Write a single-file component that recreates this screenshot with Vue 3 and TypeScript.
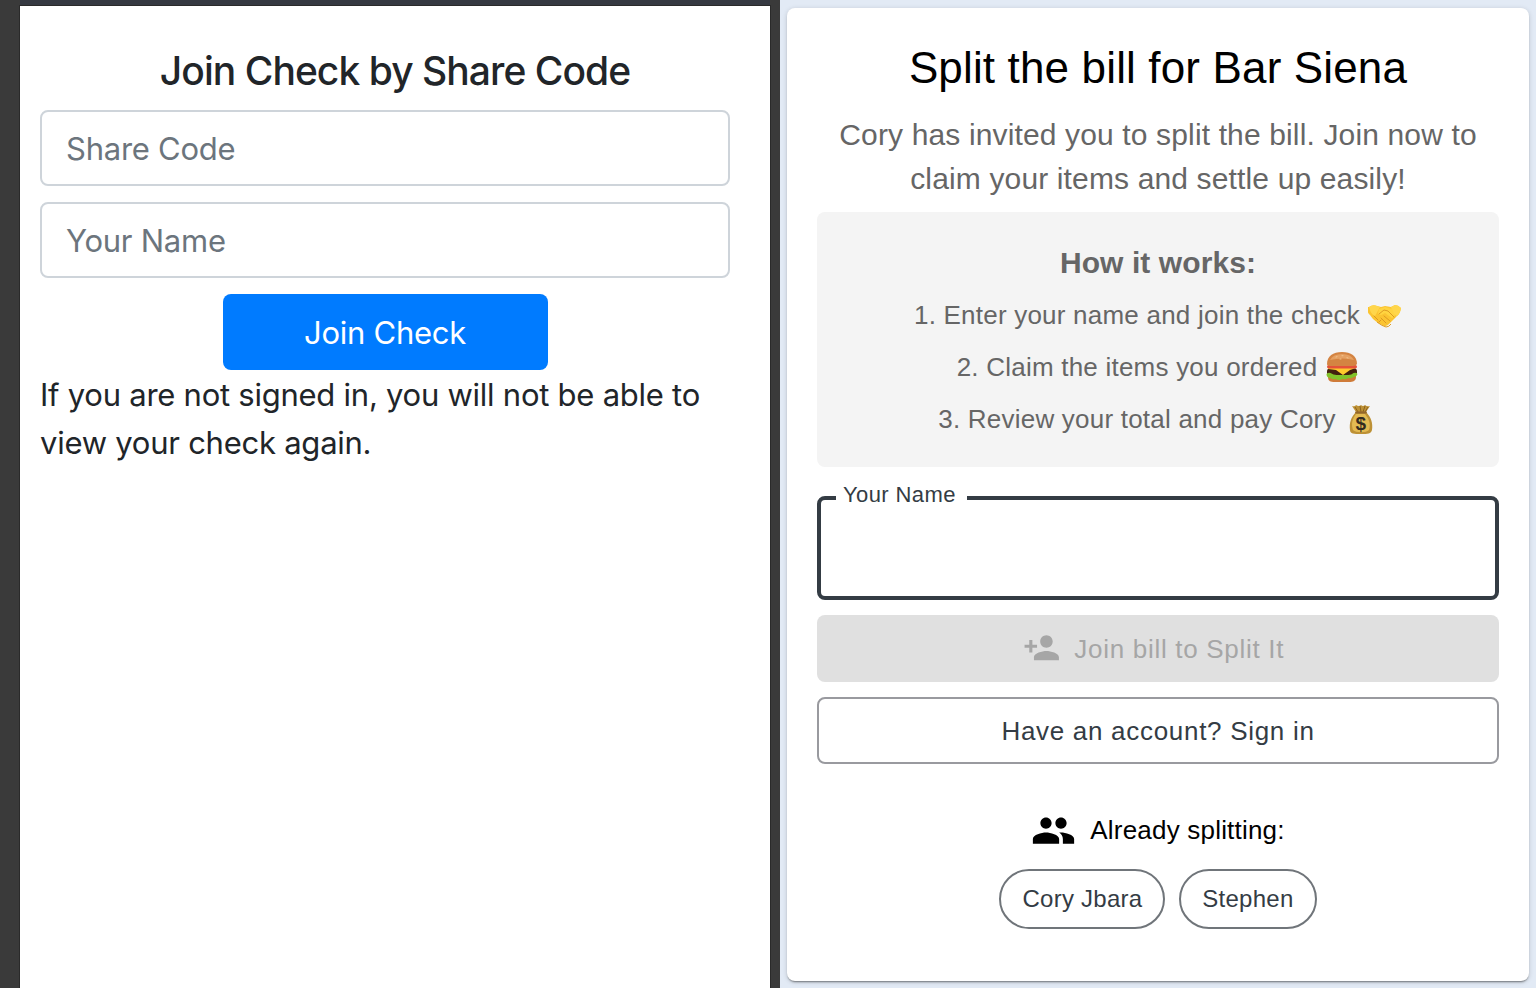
<template>
  <div class="screen">
    <section class="legacy">
      <div class="navbar-edge"></div>
      <form class="legacy-form" @submit.prevent>
        <h1 class="legacy-title">Join Check by Share Code</h1>
        <input v-model="shareCode" class="form-control" type="text" placeholder="Share Code">
        <input v-model="legacyName" class="form-control" type="text" placeholder="Your Name">
        <button class="btn-primary" type="submit">Join Check</button>
        <p class="hint">
          If you are not signed in, you will not be able to<br>
          view your check again.
        </p>
      </form>
    </section>

    <section class="redesign">
      <div class="paper">
        <h1 class="title">Split the bill for Bar Siena</h1>
        <p class="subtitle">
          Cory has invited you to split the bill. Join now to<br>
          claim your items and settle up easily!
        </p>

        <div class="how">
          <h2 class="how-title">How it works:</h2>
          <div v-for="(step, i) in steps" :key="step.icon" class="step">
            <span>{{ i + 1 }}. {{ step.text }}</span>
            <svg v-if="step.icon === 'handshake'" class="emoji" viewBox="0 0 34 34">
              <path d="M1 9Q5 6 9 8l4 1 4-1 6 1 4-2q3 0 6 3-1 6-4 8l-3 3-4 4q-3 4-6 3l-6-3-5-4-3-4q-3-2-3-8z" fill="#fbc431" />
              <path d="M1 9q4-3 8-1l3 1-5 9q-4-1-6-9zM27 7q3 0 6 3-1 6-4 8l-4-2-2-7z" fill="#ffd64b" />
              <path d="m11 11 6-2 7 2 3 7-3 2-7-5-4 2-3-1z" fill="#ffd440" />
              <path d="m11 16 5-4 4 1 6 6M16 18l6 5M13 20l5 5M6 18l4 4M11 24l2-2" fill="none" stroke="#d99420" stroke-width=".9" stroke-linecap="round" />
              <path d="M9 24q5 4 9 5 3 0 5-3" fill="none" stroke="#dd9c28" stroke-width="1" />
            </svg>
            <svg v-else-if="step.icon === 'burger'" class="emoji" viewBox="0 0 34 34">
              <path d="M3 25h28v2c0 4-3 5-7 5H10c-5 0-7-1-7-5z" fill="#cf7b39" />
              <rect x="2" y="18" width="30" height="8" rx="3.500" fill="#43200f" />
              <path d="M1.500 24q2-2 4-1 3 2 6 2t6 0 6 0 5-2q3-1 4 1-1 3-4 3-2 2-5 1-3 2-6 1-4 2-7 0-3 1-5-1-4 0-4-4z" fill="#82c32a" />
              <path d="M3 18h28l-6 2-7 5-7-5-8-1z" fill="#ffca2c" />
              <rect x="2" y="15" width="30" height="3.500" rx="1.700" fill="#e4513a" />
              <path d="M2 14C2 6 8 2 17 2s15 4 15 12q-1 2-4 2H6q-4 0-4-2z" fill="#d48442" />
              <path d="M5 10Q8 4 17 4t12 6q-11-3-24 0z" fill="#e5a163" />
              <path d="m11 7 1-.3m5-1h1m4 2 1 .3m-8 1h1" stroke="#f4cd98" stroke-width=".8" stroke-linecap="round" />
            </svg>
            <svg v-else class="emoji" viewBox="0 0 34 34">
              <path d="M12 10 8 4q3 1 4-1 3 2 5 0 2 2 4 0 2 2 5 1l-4 6c5 5 7 11 6 18-1 4-4 4-11 4S6 32 6 28c-1-7 1-13 6-18z" fill="#bd9135" />
              <path d="M12 12c-4 5-5 11-3 16 3 3 13 3 16 0 2-6 0-11-4-16z" fill="#ecc45a" opacity=".8" />
              <path d="m11 5 3 5m2-6 1 6m4-6-2 6m5-5-3 5" stroke="#805516" stroke-width=".8" />
              <path d="M12 10.500h10" stroke="#94672a" stroke-width="1.800" stroke-linecap="round" />
              <text x="17" y="28" text-anchor="middle" class="dollar">$</text>
            </svg>
          </div>
        </div>

        <fieldset class="outlined">
          <legend>Your Name</legend>
          <input v-model="name" type="text" aria-label="Your Name">
        </fieldset>

        <button class="join" disabled>
          <svg class="icon-add" viewBox="0 0 24 24" fill="currentColor">
            <path d="M15 12c2.210 0 4-1.790 4-4s-1.790-4-4-4-4 1.790-4 4 1.790 4 4 4zm-9-2V7H4v3H1v2h3v3h2v-3h3v-2H6zm9 4c-2.670 0-8 1.340-8 4v2h16v-2c0-2.660-5.330-4-8-4z" />
          </svg>
          <span>Join bill to Split It</span>
        </button>
        <button class="sign-in">Have an account? Sign in</button>

        <div class="splitting">
          <svg class="icon-people" viewBox="0 0 24 24">
            <path d="M16 11c1.660 0 2.990-1.340 2.990-3S17.660 5 16 5c-1.660 0-3 1.340-3 3s1.340 3 3 3zm-8 0c1.660 0 2.990-1.340 2.990-3S9.660 5 8 5C6.340 5 5 6.340 5 8s1.340 3 3 3zm0 2c-2.330 0-7 1.170-7 3.500V19h14v-2.500c0-2.330-4.670-3.500-7-3.500zm8 0c-.29 0-.62.020-.97.050 1.160.84 1.970 1.970 1.970 3.450V19h6v-2.500c0-2.330-4.670-3.500-7-3.500z" />
          </svg>
          <span>Already splitting:</span>
        </div>
        <div class="chips">
          <span v-for="person in people" :key="person" class="chip">{{ person }}</span>
        </div>
      </div>
    </section>
  </div>
</template>

<script setup lang="ts">
import { ref } from 'vue'

interface Step {
  icon: 'handshake' | 'burger' | 'moneybag'
  text: string
}

const shareCode = ref('')
const legacyName = ref('')
const name = ref('')

const steps: Step[] = [
  { icon: 'handshake', text: 'Enter your name and join the check' },
  { icon: 'burger', text: 'Claim the items you ordered' },
  { icon: 'moneybag', text: 'Review your total and pay Cory' }
]

const people: string[] = ['Cory Jbara', 'Stephen']
</script>

<style>
body {
  margin: 0;
  overflow: hidden;
}
</style>

<style scoped>
* {
  box-sizing: border-box;
}

h1, h2, p {
  margin: 0;
  white-space: nowrap;
}

.screen {
  display: flex;
  width: 1536px;
  height: 988px;
  overflow: hidden;
  background: #3a3a3a;
}

/* --- left: old join page --- */
.legacy {
  width: 780px;
  padding: 0 10px 0 20px;
  background: #3a3a3a;
  font-family: Inter, sans-serif;
  color: #212529;
}

.navbar-edge {
  height: 6px;
  background: #353941;
}

.legacy-form {
  display: flex;
  flex-direction: column;
  height: 982px;
  padding: 40px 40px 0 20px;
  background: #fff;
  box-shadow: 0 0 0 1px #2a2a2a;
}

.legacy-title {
  height: 48px;
  margin: 1px 0 15px 20px;
  font-size: 39px;
  font-weight: 500;
  line-height: 48px;
  text-align: center;
  letter-spacing: -0.95px;
}

.form-control {
  width: 100%;
  height: 76px;
  margin-bottom: 16px;
  padding: 0 24px;
  border: 2px solid #ced4da;
  border-radius: 8px;
  outline: none;
  font: 400 31px Inter, sans-serif;
  letter-spacing: -0.25px;
}

.form-control::placeholder {
  color: #6c757d;
  opacity: 1;
}

.btn-primary {
  align-self: center;
  width: 325px;
  height: 76px;
  border: 0;
  border-radius: 8px;
  background: #007bff;
  color: #fff;
  font: 400 31px Inter, sans-serif;
  letter-spacing: -0.25px;
}

.hint {
  margin-top: 1px;
  font-size: 31px;
  line-height: 48px;
  letter-spacing: -0.25px;
}

/* --- right: redesigned page --- */
.redesign {
  width: 756px;
  padding: 8px 7px;
  background: #e2eaf5;
  font-family: "Liberation Sans", Arial, sans-serif;
}

.paper {
  display: flex;
  flex-direction: column;
  height: 973px;
  padding: 30px;
  border-radius: 8px;
  background: #fff;
  box-shadow: 0 2px 2px -1px rgba(0, 0, 0, 0.45), 0 1px 5px rgba(0, 0, 0, 0.16);
}

.title {
  height: 60px;
  color: #000;
  font-size: 44px;
  font-weight: 400;
  line-height: 60px;
  text-align: center;
  letter-spacing: 0.15px;
}

.subtitle {
  height: 90px;
  margin: 15px 0 9px;
  color: #666;
  font-size: 30px;
  line-height: 44px;
  text-align: center;
  letter-spacing: 0.14px;
}

.how {
  height: 255px;
  padding-top: 28px;
  border-radius: 8px;
  background: #f4f4f4;
  color: #666;
  text-align: center;
}

.how-title {
  height: 49px;
  font-size: 30px;
  font-weight: 700;
  line-height: 45px;
  letter-spacing: 0.08px;
}

.step {
  display: flex;
  align-items: center;
  justify-content: center;
  height: 52px;
  gap: 8px;
  font-size: 26px;
  letter-spacing: 0.22px;
}

.emoji {
  width: 34px;
  height: 34px;
}

.dollar {
  fill: #332b20;
  font: 700 19px "Liberation Sans", sans-serif;
}

.outlined {
  height: 118px;
  min-width: 0;
  margin: 15px 0;
  padding: 0 16px;
  border: 4px solid #343c44;
  border-radius: 8px;
}

/* taller than its text, so the border line runs just below the text's middle */
.outlined legend {
  height: 32px;
  margin-left: -1px;
  padding: 0 11px 0 7px;
  color: #343c44;
  font-size: 22px;
  line-height: 26px;
  letter-spacing: 0.4px;
}

.outlined input {
  width: 100%;
  height: 64px;
  border: 0;
  outline: 0;
  background: transparent;
  font-size: 30px;
}

.join, .sign-in {
  display: flex;
  align-items: center;
  justify-content: center;
  width: 100%;
  height: 67px;
  border-radius: 8px;
  font: 400 26px "Liberation Sans", Arial, sans-serif;
  letter-spacing: 0.7px;
}

.join {
  gap: 14px;
  padding-top: 2px;
  border: 0;
  background: #e0e0e0;
  color: #a6a6a6;
}

.icon-add {
  width: 37.5px;
  height: 37.5px;
  margin: -2px 0 0 -9px;
}

.sign-in {
  margin-top: 15px;
  padding-top: 3px;
  border: 2px solid #999a9f;
  background: #fff;
  color: #343c44;
}

.splitting {
  display: flex;
  align-items: center;
  justify-content: center;
  height: 48px;
  margin-top: 42px;
  gap: 14px;
  color: #000;
  font-size: 26px;
  letter-spacing: 0.2px;
}

.icon-people {
  width: 45px;
  height: 45px;
}

.chips {
  display: flex;
  justify-content: center;
  gap: 14px;
  margin-top: 15px;
}

.chip {
  display: flex;
  align-items: center;
  height: 60px;
  padding: 0 21px;
  border: 2px solid #70757a;
  border-radius: 30px;
  color: #343c44;
  font-size: 24px;
  letter-spacing: 0.25px;
}
</style>
